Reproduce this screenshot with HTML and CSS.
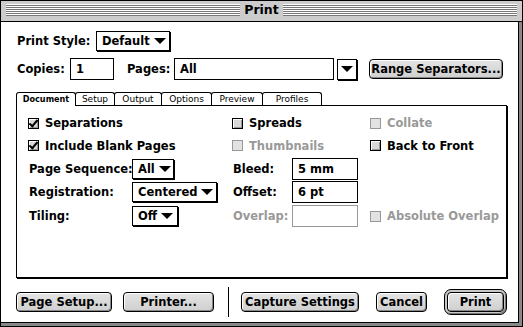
FILE: index.html
```html
<!DOCTYPE html>
<html lang="en">
<head>
  <meta charset="UTF-8" />
  <title>Print</title>
  <link rel="stylesheet" href="styles.css">
</head>
<body>
  <div class="window">
    <div class="titlebar">
      <span class="stripes"></span>
      <span class="title">Print</span>
      <span class="stripes"></span>
    </div>
    <div class="frame">
      <div class="inner">
        <div class="row row-style">
          <span class="label label-style">Print Style:</span>
          <span class="popup popup-style">Default<i class="arrow"></i></span>
        </div>

        <div class="row row-copies">
          <span class="label label-copies">Copies:</span>
          <span class="field field-copies">1</span>
          <span class="label label-pages">Pages:</span>
          <span class="field field-pages">All</span>
          <span class="combo-btn"><i class="arrow"></i></span>
          <span class="button btn-range">Range Separators...</span>
        </div>

        <div class="tabs">
          <span class="tab tab-active" style="width:60px">Document</span>
          <span class="tab" style="width:40px">Setup</span>
          <span class="tab" style="width:48px">Output</span>
          <span class="tab" style="width:51px">Options</span>
          <span class="tab" style="width:52px">Preview</span>
          <span class="tab" style="width:60px">Profiles</span>
        </div>

        <div class="panel">
          <div class="panel-grid">
            <label class="check span2"><i class="box checked"></i>Separations</label>
            <label class="check span2"><i class="box"></i>Spreads</label>
            <label class="check disabled"><i class="box"></i>Collate</label>

            <label class="check span2"><i class="box checked"></i>Include Blank Pages</label>
            <label class="check span2 disabled"><i class="box"></i>Thumbnails</label>
            <label class="check"><i class="box"></i>Back to Front</label>

            <span class="label">Page Sequence:</span>
            <span><span class="popup popup-all">All<i class="arrow"></i></span></span>
            <span class="label">Bleed:</span>
            <span class="field field-num">5 mm</span>
            <span></span>

            <span class="label">Registration:</span>
            <span><span class="popup popup-centered">Centered<i class="arrow"></i></span></span>
            <span class="label">Offset:</span>
            <span class="field field-num">6 pt</span>
            <span></span>

            <span class="label">Tiling:</span>
            <span><span class="popup popup-off">Off<i class="arrow"></i></span></span>
            <span class="label disabled">Overlap:</span>
            <span class="field field-num field-disabled"></span>
            <label class="check disabled"><i class="box"></i>Absolute Overlap</label>
          </div>
        </div>

        <div class="footer">
          <span class="button btn-setup">Page Setup...</span>
          <span class="button btn-printer">Printer...</span>
          <span class="separator"></span>
          <span class="button btn-capture">Capture Settings</span>
          <span class="button btn-cancel">Cancel</span>
          <span class="default-ring"><span class="button btn-print">Print</span></span>
        </div>
      </div>
    </div>
  </div>
</body>
</html>
```

FILE: styles.css
```css
* {
  box-sizing: border-box;
}

body {
  margin: 0;
  font-family: "DejaVu Sans", sans-serif;
  font-weight: bold;
  font-size: 11.5px;
  color: #000;
  background: #fff;
}

.window {
  width: 523px;
  height: 327px;
  border: 1px solid #000;
  background: #ccc;
  display: flex;
  flex-direction: column;
}

/* title bar */
.titlebar {
  height: 21px;
  border-bottom: 1px solid #000;
  display: flex;
  align-items: center;
  padding: 0 5px;
  background: #ccc;
}

.stripes {
  flex: 1;
  height: 12px;
  margin-top: -2px;
  background: repeating-linear-gradient(to bottom, #fff 0 1px, #777 1px 2px);
}

.title {
  padding: 0 4px;
  font-size: 12.5px;
  line-height: 14px;
  margin-top: -2px;
}

/* body frame with shadow edge */
.frame {
  flex: 1;
  border-right: 3px solid #888;
  border-bottom: 3px solid #888;
  display: flex;
}

.inner {
  flex: 1;
  background: #fff;
  border-right: 1px solid #000;
  border-bottom: 1px solid #000;
  padding: 9px 0 0 15px;
}

.row {
  display: flex;
  align-items: center;
}

.label {
  white-space: nowrap;
  padding-left: 1px;
}

.label-style {
  width: 80px;
}

.row-copies {
  margin-top: 7px;
  height: 22px;
}

.label-copies {
  width: 54px;
}

.label-pages {
  width: 48px;
  margin-left: 12px;
}

/* popups and fields */
.popup {
  display: inline-flex;
  align-items: center;
  height: 20px;
  border: 1px solid #000;
  box-shadow: 1px 1px 0 #000;
  background: #fff;
  padding: 0 5px;
  white-space: nowrap;
}

.popup-style {
  width: 74px;
}

.popup-all {
  width: 42px;
}

.popup-centered {
  width: 85px;
}

.popup-off {
  width: 46px;
}

.arrow {
  display: inline-block;
  width: 0;
  height: 0;
  border-left: 6px solid transparent;
  border-right: 6px solid transparent;
  border-top: 6px solid #000;
  margin-left: 4px;
}

.field {
  display: flex;
  align-items: center;
  height: 22px;
  border: 1px solid #000;
  background: #fff;
  padding-left: 5px;
}

.field-copies {
  width: 44px;
}

.field-pages {
  width: 160px;
}

.combo-btn {
  width: 20px;
  height: 21px;
  margin-left: 3px;
  border: 1px solid #000;
  box-shadow: 1px 1px 0 #000;
  display: flex;
  align-items: center;
  justify-content: center;
}

.combo-btn .arrow {
  margin: 0;
}

.field-num {
  width: 66px;
}

.field-disabled {
  border-color: #999;
}

/* push buttons */
.button {
  display: inline-flex;
  align-items: center;
  justify-content: center;
  height: 20px;
  border: 1px solid #000;
  border-radius: 4px;
  background: linear-gradient(#e4e4e4, #cfcfcf);
  box-shadow: inset 1px 1px 0 #fff, inset -1px -1px 0 #888;
  white-space: nowrap;
}

.btn-range {
  width: 134px;
  margin-left: 12px;
}

/* tabs */
.tabs {
  display: flex;
  margin-top: 12px;
  height: 13px;
  position: relative;
  z-index: 1;
}

.tab {
  height: 13px;
  border: 1px solid #000;
  border-bottom: none;
  border-radius: 3px 3px 0 0;
  margin-right: -1px;
  background: #fff;
  font-weight: normal;
  font-size: 9px;
  line-height: 12px;
  text-align: center;
}

.tab-active {
  height: 14px;
  font-family: "DejaVu Sans Condensed", "DejaVu Sans", sans-serif;
  font-stretch: condensed;
  font-weight: bold;
}

.panel {
  width: 491px;
  height: 173px;
  border: 1px solid #000;
  box-shadow: 1px 1px 0 #000;
  padding: 6px 0 0 11px;
}

.panel-grid {
  display: grid;
  grid-template-columns: 104px 100px 60px 78px 1fr;
  grid-template-rows: 22px 23px 23px 24px 24px;
  align-items: center;
}

.span2 {
  grid-column: span 2;
}

.check {
  display: flex;
  align-items: center;
  white-space: nowrap;
}

.box {
  width: 11px;
  height: 11px;
  border: 1px solid #000;
  background: #d8d8d8;
  box-shadow: inset 1px 1px 0 #fff, inset -1px -1px 0 #999;
  margin-right: 6px;
  position: relative;
}

.box.checked::after {
  content: "";
  position: absolute;
  left: 2px;
  top: -1px;
  width: 3px;
  height: 7px;
  border-right: 2px solid #000;
  border-bottom: 2px solid #000;
  transform: rotate(40deg);
}

.disabled {
  color: #999;
}

.disabled .box {
  border-color: #999;
  background: #e2e2e2;
  box-shadow: none;
}

/* footer */
.footer {
  display: flex;
  align-items: center;
  margin-top: 9px;
  height: 30px;
}

.btn-setup {
  width: 96px;
}

.btn-printer {
  width: 91px;
  margin-left: 11px;
}

.separator {
  width: 1px;
  height: 30px;
  background: #000;
  margin-left: 14px;
}

.btn-capture {
  width: 118px;
  margin-left: 12px;
}

.btn-cancel {
  width: 51px;
  margin-left: 17px;
}

.default-ring {
  display: flex;
  margin-left: 17px;
  padding: 2px;
  border: 1px solid #000;
  border-radius: 7px;
  background: #c8c8c8;
  box-shadow: inset -1px -1px 0 #777;
}

.btn-print {
  width: 57px;
}
```
